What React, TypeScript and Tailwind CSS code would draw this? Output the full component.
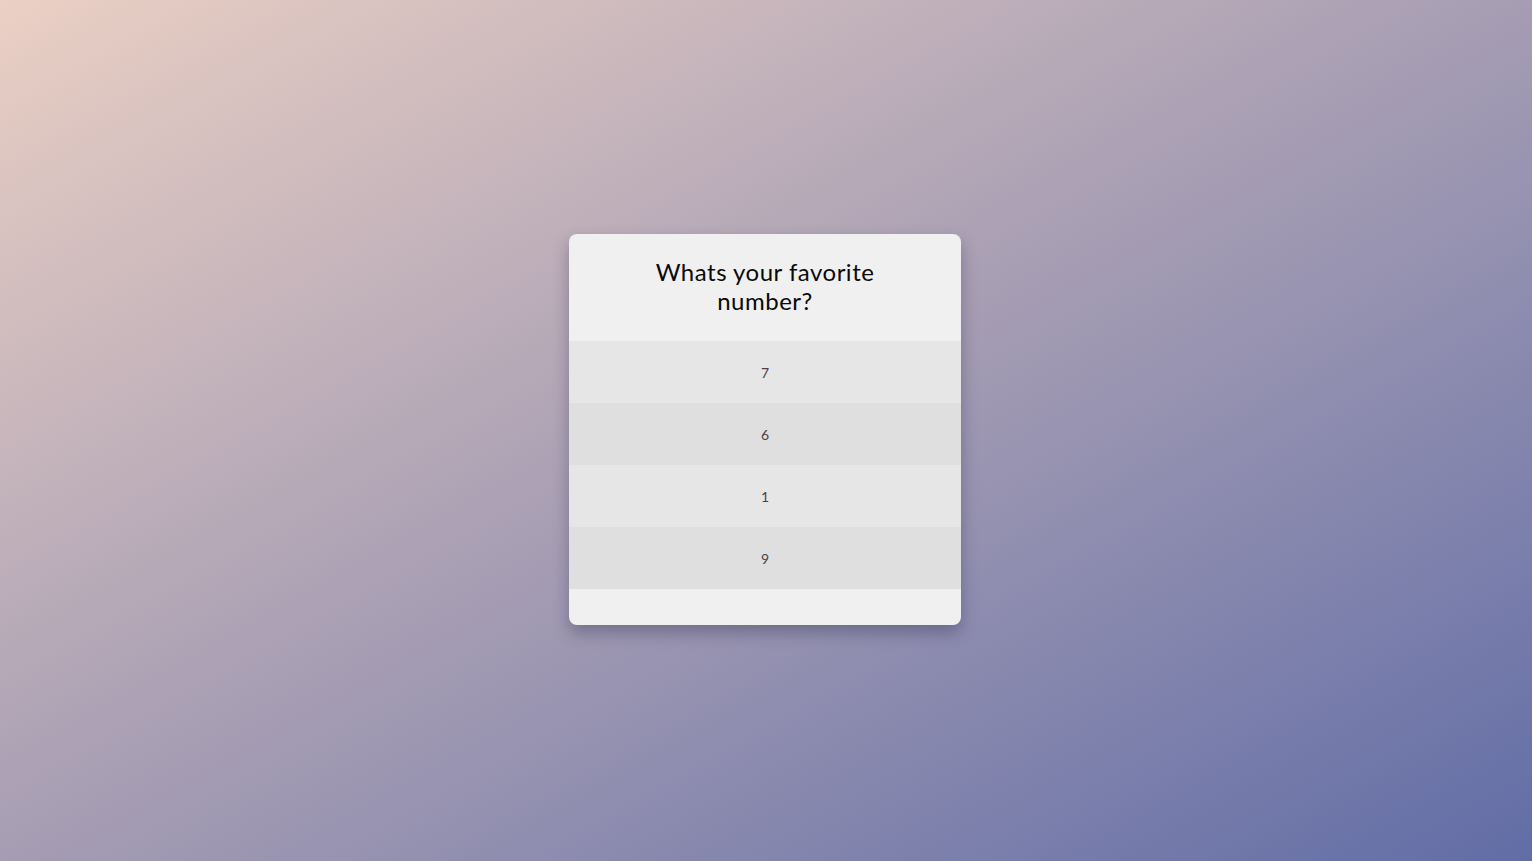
const OPTIONS = ['7', '6', '1', '9']

export default function App() {
  return (
    <main className="min-h-screen w-full flex items-center justify-center bg-gradient-to-br from-[#ebd0c4] via-[#a69db3] to-[#626da6] font-['Lato',_sans-serif]">
      <div className="w-[392px] -mt-[2px] -ml-[2px] rounded-lg bg-[#f0f0f0] shadow-[0_8px_16px_rgba(40,40,70,0.35)] overflow-hidden pb-9">
        <h1 className="px-6 pt-[23px] pb-[26px] text-center text-[24px] leading-[29px] text-[#0a0a0a] tracking-[0.5px]">
          <span className="block mx-auto max-w-[240px]">Whats your favorite number?</span>
        </h1>
        <ul>
          {OPTIONS.map((n, i) => (
            <li
              key={n}
              className={`h-[62px] flex items-center justify-center text-[14px] text-[#4d3f45] ${
                i % 2 === 0 ? 'bg-[#e6e6e6]' : 'bg-[#dfdfdf]'
              }`}
            >
              {n}
            </li>
          ))}
        </ul>
      </div>
    </main>
  )
}
